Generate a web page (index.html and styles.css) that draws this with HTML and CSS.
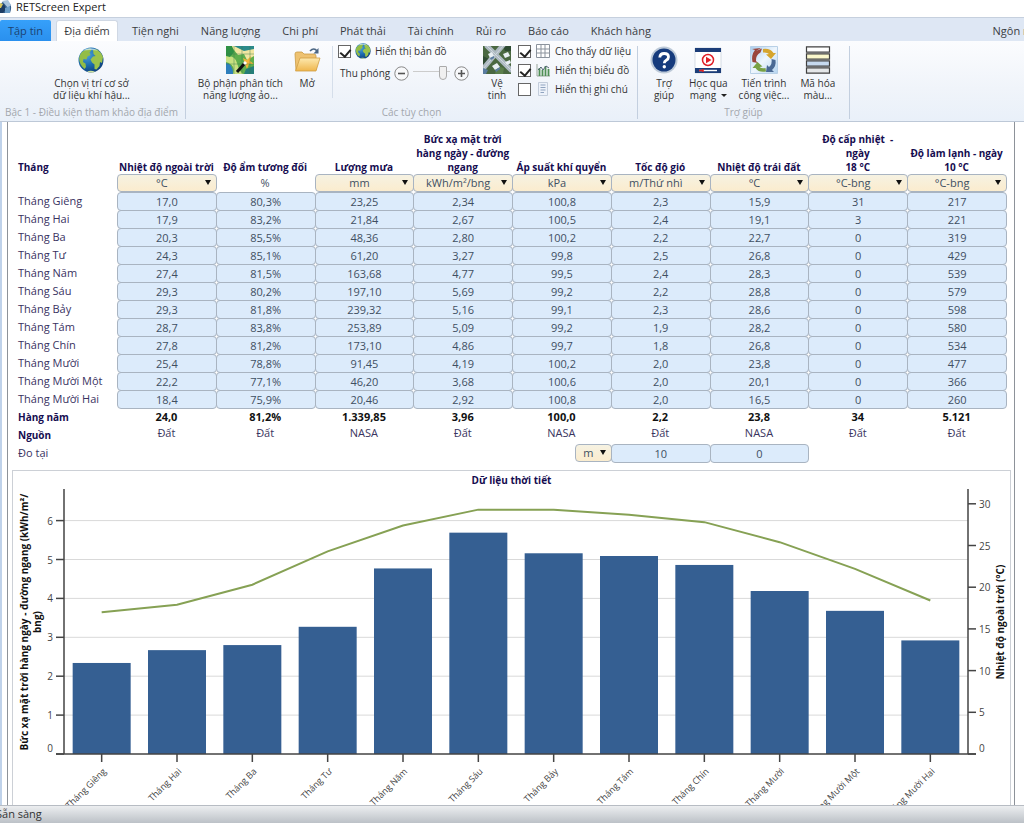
FILE: index.html
```html
<!DOCTYPE html>
<html lang="vi">
<head>
<meta charset="utf-8">
<title>RETScreen Expert</title>
<link rel="stylesheet" href="styles.css">
</head>
<body>
<svg class="defs" aria-hidden="true">
  <defs>
    <radialGradient id="sea" cx="35%" cy="30%" r="75%"><stop offset="0" stop-color="#4ea3dc"/><stop offset=".55" stop-color="#1c6cae"/><stop offset="1" stop-color="#0e3f7c"/></radialGradient>
    <linearGradient id="folder" x1="0" y1="0" x2="0" y2="1"><stop offset="0" stop-color="#fde9ae"/><stop offset="1" stop-color="#efb64d"/></linearGradient>
    <linearGradient id="pale" x1="0" y1="0" x2="1" y2="1"><stop offset="0" stop-color="#a9cdee"/><stop offset=".5" stop-color="#eef6fd"/><stop offset="1" stop-color="#b5d4f0"/></linearGradient>
    <symbol id="globe" viewBox="0 0 26 26">
      <circle cx="13" cy="13" r="12.5" fill="url(#sea)"/>
      <path d="M2 8C4 4 8 2 12 1.500L13.500 3 11.500 5.500 12.500 8 9.500 9.500 8.500 12.500 5.500 12 5 15 7.500 16.500 8 20 6.500 22C3 19 1 15 1.200 11z" fill="#93bd46"/>
      <path d="M15 2.500L19 2.500 23 6 25 10 24 16 22 15 21.500 19 18.500 22.500 16.500 22 16.500 17.500 14 15.500 12.500 12.500 15 9.500 17.500 9 15.500 7z" fill="#9cc34b"/>
      <path d="M5 3.500Q12-1 20 3.500Q12 2.500 5 3.500z" fill="#d9edf7" opacity=".7"/>
      <path d="M9 24.500Q13 23 17 24.700Q13 26.500 9 24.500z" fill="#cfe39f"/>
    </symbol>
  </defs>
</svg>

<header class="titlebar">
  <svg class="app-icon" viewBox="0 0 12 14" aria-hidden="true"><path d="M0 5Q4-1 8 2Q13 5 10 13H0z" fill="#35618f"/><path d="M2 1L8 0 11 5 8 8z" fill="#a8c4dc"/><path d="M0 7L4 4 6 9 3 13H0z" fill="#1d3d64"/><path d="M5 8L10 6 10 13H5z" fill="#6c9ec8"/><path d="M0 3L3 4 1 8H0z" fill="#d7c65c"/></svg>
  <h1>RETScreen Expert</h1>
</header>

<nav class="tabs" aria-label="Menu">
  <button class="tab file" type="button">Tập tin</button>
  <button class="tab active" type="button">Địa điểm</button>
  <button class="tab" type="button">Tiện nghi</button>
  <button class="tab" type="button">Năng lượng</button>
  <button class="tab" type="button">Chi phí</button>
  <button class="tab" type="button">Phát thải</button>
  <button class="tab" type="button">Tài chính</button>
  <button class="tab" type="button">Rủi ro</button>
  <button class="tab" type="button">Báo cáo</button>
  <button class="tab" type="button">Khách hàng</button>
  <button class="tab language" type="button">Ngôn ngữ</button>
</nav>

<section class="ribbon" aria-label="Ribbon">
  <div class="group climate">
    <div class="tools">
      <button class="tool" type="button"><svg class="icon" viewBox="0 0 28 28"><use href="#globe" x="1" y="1" width="26" height="26"/></svg><span>Chọn vị trí cơ sở<br>dữ liệu khí hậu...</span></button>
    </div>
    <p class="caption">Bậc 1 - Điều kiện tham khảo địa điểm</p>
  </div>

  <div class="group options">
    <div class="tools">
      <div class="pair">
        <button class="tool" type="button"><svg class="icon" viewBox="0 0 28 28"><path fill="#5fae4c" d="M0 0H28V28H0z"/><path fill="#f2e6a0" d="M5 0H28V10L21 14 18 8 12 9 8 4z"/><path fill="#2b8a8b" d="M8 0H28V3L18 5z"/><path fill="#c9e080" d="M0 10Q9 9 11 17T17 28H7Q10 19 0 16z"/><path fill="#2d7ebc" d="M0 17Q7 18 7 28H0z"/><path fill="#2f9145" d="M0 0H6L8 6 4 11 0 10z"/><path fill="#f3b43a" d="M17 12L21 14 25 10 24 15 28 18 23 18 21 23 19 18z"/><path fill="#247d79" d="M20 23L28 20V28H18z"/><path d="M8 0V28M16 0V28M24 0V28M0 8H28M0 18H28" stroke="#387a4d" stroke-width=".6" fill="none" opacity=".7"/><path d="M11 26L19 17" stroke="#111" stroke-width="3"/><path d="M18 18L20 16" stroke="#fff" stroke-width="3"/></svg><span>Bộ phận phân tích<br>năng lượng ảo...</span></button>
        <button class="tool open" type="button"><svg class="icon" viewBox="0 0 28 28"><path d="M2 8Q2 6 4 6H9L11 8H21Q23 8 23 10V24H3z" fill="#eec271" stroke="#c99a45" stroke-width=".8"/><path d="M7 12H27L23 25H2.500z" fill="url(#folder)" stroke="#cf9d43" stroke-width=".8"/><path d="M17 5Q21 1 24 5" fill="none" stroke="#4b6683" stroke-width="1.700"/><path d="M25.500 2V7.500H20.500z" fill="#4b6683"/></svg><span>Mở</span></button>
      </div>
      <div class="map-options">
        <label class="check"><input type="checkbox" checked><svg class="mini" viewBox="0 0 16 16"><use href="#globe" width="16" height="16"/></svg>Hiển thị bản đồ</label>
        <div class="zoom"><label for="zoom">Thu phóng</label>
          <button type="button" class="round" aria-label="-"><svg viewBox="0 0 15 15"><circle cx="7.500" cy="7.500" r="6.700" fill="#f8f9fb" stroke="#888"/><path d="M4 7.500H11" stroke="#555" stroke-width="1.600"/></svg></button>
          <input id="zoom" type="range" min="0" max="10" value="9">
          <button type="button" class="round" aria-label="+"><svg viewBox="0 0 15 15"><circle cx="7.500" cy="7.500" r="6.700" fill="#f8f9fb" stroke="#888"/><path d="M4 7.500H11M7.500 4V11" stroke="#555" stroke-width="1.600"/></svg></button>
        </div>
      </div>
      <button class="tool satellite" type="button"><svg class="icon" viewBox="0 0 28 28"><path fill="#4a6841" d="M0 0H28V28H0z"/><path fill="#2f4b33" d="M0 10L6 13 4 19H0zM20 0H28V5L22 5z"/><path fill="#5c7f4c" d="M14 20L21 22 20 28H12z"/><path d="M-1 24L21-2M3-1L29 25" stroke="#aebac2" stroke-width="5" fill="none"/><path d="M0 23L20 0M4 0L28 24" stroke="#d5dde2" stroke-width=".8"/><path d="M5 8L9 6 11 10 7 12zM20 8L25 6 27 10 22 12zM9 20L14 17 17 21 12 24zM22 16L27 14 28 17 24 19z" fill="#e9eff4"/><path d="M7 12L11 10 11 12 8 14zM12 24L17 21 17 23 13 26zM0 22L5 24 3 28H0z" fill="#5a7ca0"/></svg><span>Vệ<br>tinh</span></button>
      <div class="view-options">
        <label class="check"><input type="checkbox" checked><svg class="mini" viewBox="0 0 16 16"><path d="M1.500 1.500H14.500V14.500H1.500zM6 1.500V14.500M10 1.500V14.500M1.500 6H14.500M1.500 10H14.500" fill="#fff" stroke="#8b939d"/></svg>Cho thấy dữ liệu</label>
        <label class="check"><input type="checkbox" checked><svg class="mini" viewBox="0 0 16 16"><path d="M2 2V14H15" fill="none" stroke="#98a59b"/><path d="M4.500 14V6M7.500 14V8M10.500 14V4M13.500 14V7" stroke="#4f8f55" stroke-width="1.800"/><path d="M3 8L6 5 8 8 11 4 14 6" fill="none" stroke="#567"/></svg>Hiển thị biểu đồ</label>
        <label class="check"><input type="checkbox"><svg class="mini" viewBox="0 0 16 16"><path d="M3.500 1.500H12.500V14.500H3.500z" fill="#edf2fa" stroke="#c3cddb"/><path d="M5.500 4H10.500M5.500 6.500H10.500M5.500 9H10.500M5.500 11.500H9" stroke="#8fa3bf"/></svg>Hiển thị ghi chú</label>
      </div>
    </div>
    <p class="caption">Các tùy chọn</p>
  </div>

  <div class="group help">
    <div class="tools">
      <button class="tool" type="button"><svg class="icon" viewBox="0 0 28 28"><circle cx="14" cy="14" r="13.500" fill="#bcc9d8"/><circle cx="14" cy="14" r="11.500" fill="#163b7d"/><path d="M9.800 11.500Q10 7.500 14.200 7.500Q18.500 7.500 18.500 11Q18.500 13 16.300 14.200Q14.300 15.300 14.300 17.300" fill="none" stroke="#fff" stroke-width="2.800"/><circle cx="14.300" cy="20.700" r="1.700" fill="#fff"/></svg><span>Trợ<br>giúp</span></button>
      <button class="tool" type="button"><svg class="icon" viewBox="0 0 28 28"><path d="M1 2H27V27H1z" fill="#fff" stroke="#c6ced9" stroke-width=".7"/><path d="M1 2H27V6H1zM1 22H27V27H1z" fill="#1c3d78"/><path d="M5 24.500H23" stroke="#fff" stroke-width="1.400"/><path d="M5 24.500H9M9 23V26" stroke="#d22" stroke-width="1.500"/><circle cx="14" cy="14" r="5.500" fill="#fff" stroke="#df1e26" stroke-width="1.500"/><path d="M12 10.800L17.500 14 12 17.200z" fill="#df1e26"/></svg><span>Học qua<br>mạng <i class="caret"></i></span></button>
      <button class="tool" type="button"><svg class="icon" viewBox="0 0 28 28"><path d="M.5.500H27.500V27.500H.500z" fill="url(#pale)" stroke="#b8d0e6"/><path d="M6 5L12 2.500 10.500 6.500Q5.500 9 6 15L8 17 2.500 16Q1 9 5 4L2 3 11 2z" fill="#99453b"/><path d="M13 3Q20 2 23.500 7L26 7 21 13 16 8.500 19 8Q17 6 13 6.500z" fill="#d6a52d"/><path d="M25.500 14Q26.500 20 22 24L24 26H16L17 19 19 21Q22.500 18 21.500 13z" fill="#4a6994"/><path d="M16 25.500Q9 27 5.500 22L2.500 22 7.500 16 12.500 20.500 9.500 21Q12 23 15.500 22z" fill="#78a144"/></svg><span>Tiến trình<br>công việc...</span></button>
      <button class="tool" type="button"><svg class="icon" viewBox="0 0 28 28"><g stroke="#404040" stroke-width="1.200"><path d="M2.500.800H25.500V6.200H2.500z" fill="#fff"/><path d="M2.500 7.800H25.500V13.200H2.500z" fill="#fbf8cc"/><path d="M2.500 14.800H25.500V20.200H2.500z" fill="#c6d9ef"/><path d="M2.500 21.800H25.500V27.200H2.500z" fill="#e4e6e8"/></g></svg><span>Mã hóa<br>màu...</span></button>
    </div>
    <p class="caption">Trợ giúp</p>
  </div>
</section>

<main class="workspace">
  <div class="sheet">
    <table class="climate-data">
      <colgroup><col class="month-col"><col span="9"></colgroup>
      <thead>
        <tr class="titles">
          <th scope="col">Tháng</th>
          <th scope="col" id="c0">Nhiệt độ ngoài trời</th>
          <th scope="col" id="c1">Độ ẩm tương đối</th>
          <th scope="col" id="c2">Lượng mưa</th>
          <th scope="col" id="c3">Bức xạ mặt trời<br>hàng ngày - đường<br>ngang</th>
          <th scope="col" id="c4">Áp suất khí quyển</th>
          <th scope="col" id="c5">Tốc độ gió</th>
          <th scope="col" id="c6">Nhiệt độ trái đất</th>
          <th scope="col" id="c7">Độ cấp nhiệt&nbsp; -<br>ngày<br>18 °C</th>
          <th scope="col" id="c8">Độ làm lạnh - ngày<br>10 °C</th>
        </tr>
        <tr>
          <td></td>
          <td><div class="drop"><select aria-labelledby="c0"><option>°C</option></select></div></td>
          <td>%</td>
          <td><div class="drop"><select aria-labelledby="c2"><option>mm</option></select></div></td>
          <td><div class="drop"><select aria-labelledby="c3"><option>kWh/m²/bng</option></select></div></td>
          <td><div class="drop"><select aria-labelledby="c4"><option>kPa</option></select></div></td>
          <td><div class="drop"><select aria-labelledby="c5"><option>m/Thứ nhì</option></select></div></td>
          <td><div class="drop"><select aria-labelledby="c6"><option>°C</option></select></div></td>
          <td><div class="drop"><select aria-labelledby="c7"><option>°C-bng</option></select></div></td>
          <td><div class="drop"><select aria-labelledby="c8"><option>°C-bng</option></select></div></td>
        </tr>
      </thead>
      <tbody id="months"></tbody>
      <tfoot>
        <tr class="annual"><th scope="row">Hàng năm</th><td>24,0</td><td>81,2%</td><td>1.339,85</td><td>3,96</td><td>100,0</td><td>2,2</td><td>23,8</td><td>34</td><td>5.121</td></tr>
        <tr class="source"><th scope="row">Nguồn</th><td>Đất</td><td>Đất</td><td>NASA</td><td>Đất</td><td>NASA</td><td>Đất</td><td>NASA</td><td>Đất</td><td>Đất</td></tr>
        <tr><th scope="row" class="plain" id="measured">Đo tại</th><td></td><td></td><td></td><td></td>
          <td><div class="drop unit"><select aria-labelledby="measured"><option>m</option></select></div></td>
          <td><input type="text" value="10" aria-labelledby="measured c5"></td>
          <td><input type="text" value="0" aria-labelledby="measured c6"></td><td></td><td></td></tr>
      </tfoot>
    </table>

    <section class="chart">
      <h2>Dữ liệu thời tiết</h2>
      <svg id="plot" viewBox="0 0 997 346" role="img" aria-label="Dữ liệu thời tiết"></svg>
    </section>
  </div>
</main>

<footer class="status">Sẵn sàng</footer>
<script src="script.js"></script>
</body>
</html>
```

FILE: styles.css
```css
* { box-sizing: border-box; }

body {
  margin: 0;
  height: 100vh;
  display: flex;
  flex-direction: column;
  overflow: hidden;
  background: #fff;
  color: #333;
  font: 11px/14px "Open Sans", "Noto Sans", sans-serif;
}

h1, h2, p { margin: 0; font-size: inherit; line-height: 14px; }

button, input, select {
  margin: 0;
  padding: 0;
  border: 0;
  background: none;
  color: inherit;
  font: inherit;
}

.defs { position: absolute; width: 0; height: 0; }

/* Title bar */
.titlebar { flex: none; display: flex; align-items: center; gap: 4px; height: 17px; padding-bottom: 3px; }
.titlebar h1 { font-weight: 400; color: #222; }
.app-icon { width: 12px; height: 14px; }

/* Tabs */
.tabs {
  flex: none;
  display: flex;
  align-items: flex-end;
  height: 24px;
  border-top: 1px solid #c6d0de;
  background: #dee7f4;
}
.tab { height: 21px; padding: 0 11px; white-space: nowrap; color: #3a3d42; }
.tab.file { width: 51px; padding: 0; border-radius: 2px 2px 0 0; background: linear-gradient(#36a0fa, #2a90ee); color: #1c4372; }
.tab.active { width: 62px; margin: 0 3px 0 5px; padding: 0; border: 1px solid #d0d8e4; border-bottom: 0; border-radius: 3px 3px 0 0; background: #fff; }
.tab.language { margin: 0 -30px 0 auto; }

/* Ribbon */
.ribbon {
  flex: none;
  display: flex;
  height: 81px;
  padding: 5px 0 2px;
  border-bottom: 1px solid #bdc8d7;
  background: linear-gradient(#fbfcfe, #f0f4fa 60%, #e9f0f9);
  font-size: 10px;
}
.group { display: flex; flex-direction: column; border-right: 1px solid #c3cfdf; }
.climate { width: 186px; padding-right: 2px; }
.options { width: 452px; }
.help { width: 212px; }
.tools { flex: 1; display: flex; align-items: flex-start; justify-content: center; }
.caption { height: 14px; text-align: center; white-space: nowrap; color: #a3a7ad; }
.tool { display: flex; flex-direction: column; align-items: center; gap: 3px; line-height: 12px; white-space: nowrap; }
.icon { flex: none; width: 28px; height: 28px; }
.pair { flex: none; display: flex; align-items: flex-start; justify-content: flex-end; gap: 8px; width: 147px; height: 52px; padding-right: 9px; border-right: 1px solid #d5deea; }
.open { width: 32px; }
.options .tools { justify-content: flex-start; }
.map-options { width: 150px; padding-left: 5px; }
.check { display: flex; align-items: center; gap: 4px; height: 16px; white-space: nowrap; }
.check input {
  appearance: none;
  flex: none;
  width: 13px;
  height: 13px;
  border: 1px solid #666;
  background: #fff;
}
.check input:checked::after {
  content: "";
  display: block;
  width: 5px;
  height: 8px;
  margin: 1px 0 0 3px;
  border: solid #222;
  border-width: 0 2px 2px 0;
  transform: rotate(40deg);
}
.mini { width: 16px; height: 16px; flex: none; }
.view-options { display: grid; gap: 3px; padding-left: 7px; margin-top: -3px; }
.map-options .check { margin-top: -3px; }
.zoom { display: flex; align-items: center; gap: 4px; height: 16px; margin: 6px 0 0 2px; white-space: nowrap; }
.round { width: 15px; height: 15px; }
.round svg { display: block; width: 15px; height: 15px; }
.zoom input { appearance: none; width: 37px; height: 15px; background: linear-gradient(#ccc, #ccc) 0 5px / 100% 1px no-repeat; }
.zoom input::-webkit-slider-thumb {
  appearance: none;
  width: 8px;
  height: 14px;
  border: 1px solid #aaa;
  border-radius: 1px 1px 4px 4px;
  background: #f0f0f0;
}
.satellite { width: 28px; }
.help .tools { justify-content: flex-start; gap: 11px; padding-left: 12px; }
.caret { display: inline-block; margin-left: 2px; border: 3px solid transparent; border-top-color: #222; border-bottom: 0; vertical-align: 2px; }

/* Sheet */
.workspace { flex: 1; min-height: 0; overflow: hidden; padding: 0 9px 0 5px; border-left: 2px solid #bfd2ea; }
.sheet { min-height: 100%; padding: 10px 3px 0 4px; border: solid #8d9299; border-width: 0 1px; }
.climate-data { width: 100%; padding: 0 5px; table-layout: fixed; border-spacing: 0; color: #3f4f62; }
.month-col { width: 100px; }
.climate-data th, .climate-data td { height: 18px; padding: 0; text-align: center; vertical-align: middle; line-height: 16px; white-space: nowrap; }
.climate-data th { font-size: 10px; color: #150c50; }
.climate-data th:first-child { padding-left: 1px; text-align: left; }
.climate-data tbody th, .climate-data .plain { font-size: 11px; font-weight: 400; color: #39325f; }
.climate-data .titles th { height: 42px; line-height: 14px; vertical-align: bottom; }
.climate-data input, .drop {
  display: block;
  width: calc(100% + 1px);
  height: 19px;
  margin-bottom: -1px;
  border: 1px solid #a9b4c1;
  border-radius: 4px;
  background: #dcebfb;
  text-align: center;
}
.drop { position: relative; height: 18px; margin: 0; background: linear-gradient(#f6f2e2, #fbecce); }
.drop select { appearance: none; display: block; width: 100%; height: 16px; padding-right: 10px; text-align: center; text-align-last: center; }
.drop::after {
  content: "";
  position: absolute;
  top: 5px;
  right: 5px;
  border: 3px solid transparent;
  border-top: 5px solid #111;
  border-bottom: 0;
  pointer-events: none;
}
.drop.unit { width: 37px; margin: 0 -1px 0 auto; }
.annual td { font-weight: 700; color: #111; }
.climate-data .source td { line-height: 14px; vertical-align: top; color: #3a3560; }

/* Chart */
.chart { margin-top: 8px; border: solid #ccd0d6; border-width: 1px 1px 0; }
.chart h2 { padding-top: 2px; text-align: center; font-size: 10px; color: #150c50; }
.chart svg { display: block; width: 100%; height: auto; }
.grid { stroke: #d9d9d9; }
.axis { fill: none; stroke: #444; stroke-width: 1.5; }
.bar { fill: #355f92; }
.trend { fill: none; stroke: #86a154; stroke-width: 2; }
.tick { fill: #444; font-size: 10px; }
.month { fill: #444; font-size: 9px; text-anchor: end; }
.axis-title { fill: #111; font-size: 10px; font-weight: 700; text-anchor: middle; }
.end { text-anchor: end; }

/* Status bar */
.status { flex: none; height: 18px; border-top: 1px solid #b7bcc3; background: linear-gradient(#eceef0, #bcc1c7); text-indent: -4px; line-height: 15px; }
```

FILE: script.js
```js
const months = [
  ["Tháng Giêng", "17,0", "80,3%", "23,25", "2,34", "100,8", "2,3", "15,9", "31", "217"],
  ["Tháng Hai", "17,9", "83,2%", "21,84", "2,67", "100,5", "2,4", "19,1", "3", "221"],
  ["Tháng Ba", "20,3", "85,5%", "48,36", "2,80", "100,2", "2,2", "22,7", "0", "319"],
  ["Tháng Tư", "24,3", "85,1%", "61,20", "3,27", "99,8", "2,5", "26,8", "0", "429"],
  ["Tháng Năm", "27,4", "81,5%", "163,68", "4,77", "99,5", "2,4", "28,3", "0", "539"],
  ["Tháng Sáu", "29,3", "80,2%", "197,10", "5,69", "99,2", "2,2", "28,8", "0", "579"],
  ["Tháng Bảy", "29,3", "81,8%", "239,32", "5,16", "99,1", "2,3", "28,6", "0", "598"],
  ["Tháng Tám", "28,7", "83,8%", "253,89", "5,09", "99,2", "1,9", "28,2", "0", "580"],
  ["Tháng Chín", "27,8", "81,2%", "173,10", "4,86", "99,7", "1,8", "26,8", "0", "534"],
  ["Tháng Mười", "25,4", "78,8%", "91,45", "4,19", "100,2", "2,0", "23,8", "0", "477"],
  ["Tháng Mười Một", "22,2", "77,1%", "46,20", "3,68", "100,6", "2,0", "20,1", "0", "366"],
  ["Tháng Mười Hai", "18,4", "75,9%", "20,46", "2,92", "100,8", "2,0", "16,5", "0", "260"]
];

document.getElementById("months").innerHTML = months.map(([name, ...values], r) =>
  `<tr><th scope="row" id="m${r}">${name}</th>` +
  values.map((v, c) => `<td><input type="text" value="${v}" aria-labelledby="m${r} c${c}"></td>`).join("") +
  "</tr>").join("");

const number = text => parseFloat(text.replace(",", "."));
const leftEdge = 51, rightEdge = 955, topEdge = 2, base = 267;
const step = (rightEdge - leftEdge) / months.length;
const radiation = v => base - v * 38.9;
const temperature = v => base - v * 8.34;
const middle = i => leftEdge + step * (i + 0.5);
const parts = [];

for (let v = 1; v <= 6; v++) {
  parts.push(`<path class="grid" d="M${leftEdge} ${radiation(v)}H${rightEdge}"/>`);
}
months.forEach((m, i) => {
  const y = radiation(number(m[4]));
  parts.push(`<rect class="bar" x="${middle(i) - 29}" y="${y}" width="58" height="${base - y}"/>`);
});
parts.push(`<path class="axis" d="M${leftEdge} ${topEdge}V${base}M${rightEdge} ${topEdge}V${base}M${leftEdge - 8} ${base}H${rightEdge + 8}"/>`);
for (let v = 0; v <= 6; v++) {
  const y = radiation(v);
  parts.push(`<path class="axis" d="M${leftEdge - 8} ${y}H${leftEdge}"/><text class="tick end" x="${leftEdge - 11}" y="${v ? y + 4 : y - 2}">${v}</text>`);
}
for (let v = 0; v <= 30; v += 5) {
  const y = temperature(v);
  parts.push(`<path class="axis" d="M${rightEdge} ${y}H${rightEdge + 8}"/><text class="tick" x="${rightEdge + 11}" y="${v ? y + 4 : y - 2}">${v}</text>`);
}
months.forEach((m, i) => {
  const x = middle(i);
  parts.push(`<path class="axis" d="M${x} ${base}V${base + 8}"/><text class="month" transform="translate(${x + 5} ${base + 18}) rotate(-45)">${m[0]}</text>`);
});
parts.push(`<polyline class="trend" points="${months.map((m, i) => `${middle(i)},${temperature(number(m[1]))}`).join(" ")}"/>`);
parts.push('<g class="axis-title"><text transform="translate(15 135) rotate(-90)">Bức xạ mặt trời hàng ngày - đường ngang (kWh/m²/</text><text transform="translate(28 135) rotate(-90)">bng)</text><text transform="translate(991 135) rotate(-90)">Nhiệt độ ngoài trời (°C)</text></g>');
document.getElementById("plot").innerHTML = parts.join("");
```
